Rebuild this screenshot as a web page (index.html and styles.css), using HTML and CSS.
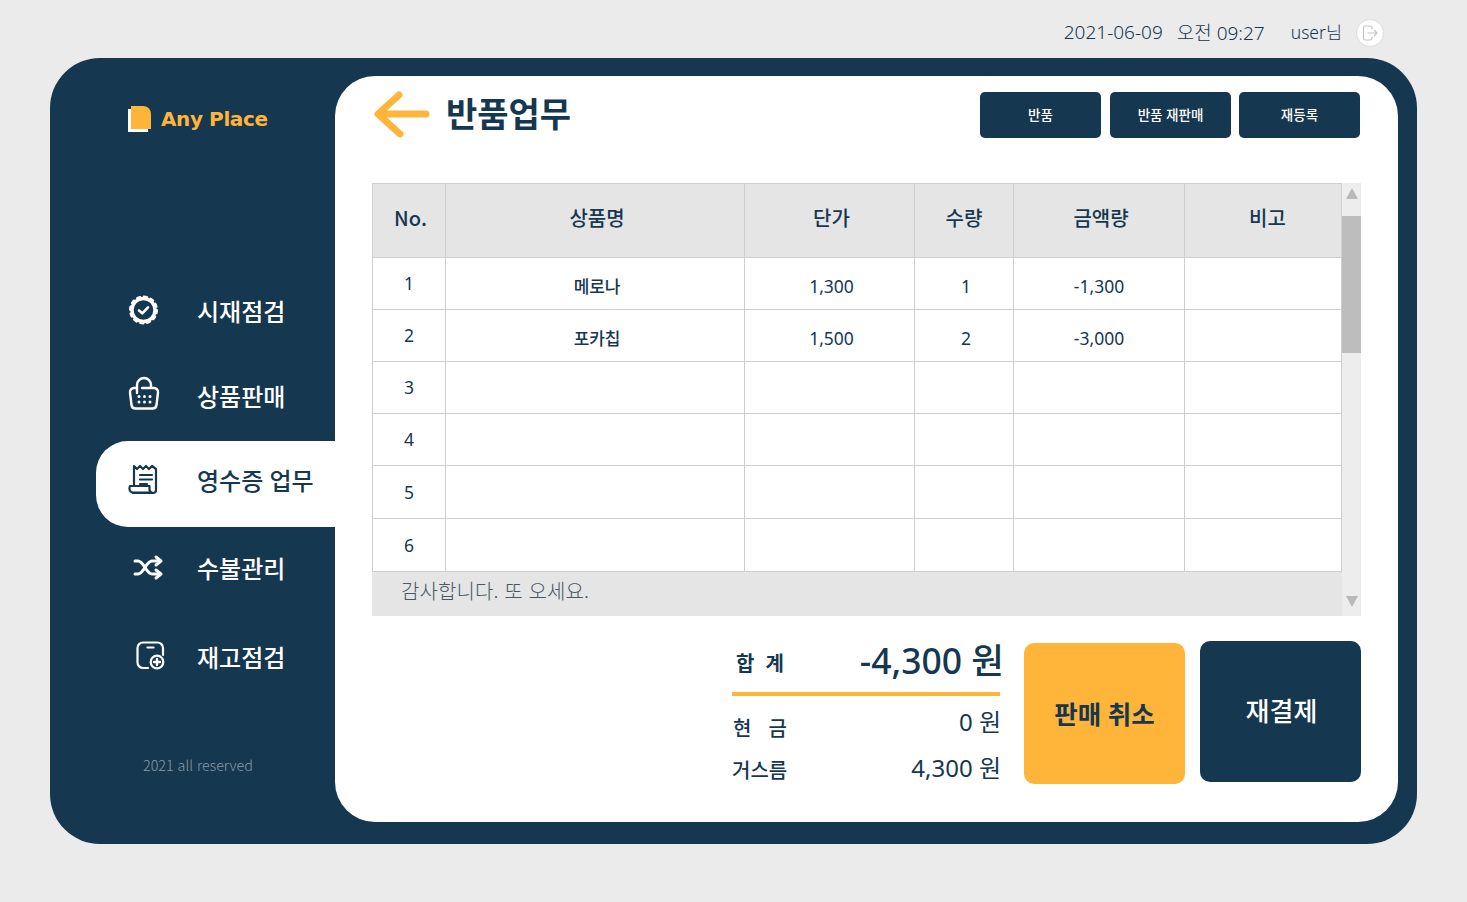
FILE: index.html
```html
<!DOCTYPE html>
<html lang="ko">
<head>
    <meta charset="UTF-8">
    <title>반품업무</title>
    <link rel="stylesheet" href="styles.css">
</head>
<body>
    <div class="topbar">
        <span class="date">2021-06-09</span>
        <span class="time">오전 09:27</span>
        <span class="user">user님</span>
        <span class="logout">
            <svg width="18" height="18" viewBox="0 0 18 18" fill="none" stroke="#c4c4c4" stroke-width="1.2" stroke-linecap="round" stroke-linejoin="round">
                <path d="M11 5V3.800A1.800 1.800 0 0 0 9.200 2H4.300a1.800 1.800 0 0 0-1.800 1.800v10.400A1.800 1.800 0 0 0 4.300 16h4.900a1.800 1.800 0 0 0 1.800-1.800V13"/>
                <path d="M7 9h9M13.500 6.500 16 9l-2.500 2.500"/>
            </svg>
        </span>
    </div>

    <div class="frame">
        <aside class="sidebar">
            <div class="logo">
                <span class="logo-mark"></span>
                <span class="logo-text">Any Place</span>
            </div>
            <nav class="menu">
                <a class="menu-item">
                    <svg class="menu-icon" width="40" height="32" viewBox="0 0 40 32" fill="none" stroke="currentColor" stroke-linecap="round" stroke-linejoin="round">
                        <circle cx="15.500" cy="16" r="11.500" stroke-width="3.400"/>
                        <circle cx="15.500" cy="16" r="13.400" stroke-width="2.200" stroke-dasharray="3.200 3.810"/>
                        <path d="M11 16.500l3.300 2.800 5.700-6" stroke-width="2.600"/>
                    </svg>
                    <span>시재점검</span>
                </a>
                <a class="menu-item">
                    <svg class="menu-icon" width="40" height="32" viewBox="0 -1 40 32" fill="none" stroke="currentColor" stroke-width="2.400" stroke-linecap="round" stroke-linejoin="round">
                        <path d="M9 8H6a4 4 0 0 0-4 4.500l1.500 12.500a4 4 0 0 0 4 3.500h17a4 4 0 0 0 4-3.500L30 12.500A4 4 0 0 0 26 8h-2"/>
                        <path d="M9 13V5a7 7 0 0 1 14 0v3h-9"/>
                        <g fill="currentColor" stroke="none">
                            <circle cx="11" cy="16.500" r="1.500"/><circle cx="16.500" cy="16.500" r="1.500"/><circle cx="22" cy="16.500" r="1.500"/>
                            <circle cx="11" cy="22" r="1.500"/><circle cx="16.500" cy="22" r="1.500"/><circle cx="22" cy="22" r="1.500"/>
                        </g>
                    </svg>
                    <span>상품판매</span>
                </a>
                <a class="menu-item active">
                    <svg class="menu-icon" width="40" height="32" viewBox="0 0 40 32" fill="none" stroke="currentColor" stroke-width="2.200" stroke-linecap="round" stroke-linejoin="round">
                        <path d="M6 21V2l3 3 3-3 3 3 3-3 3 3 3-3 4 3v21a3 3 0 0 1-3 3H5"/>
                        <path d="M2 22h19.500v3.500a3 3 0 0 0 2.500 3H5a3.500 3.500 0 0 1-3.500-3.500c0-1.500 0-3 .5-3z"/>
                        <path d="M12 11h12M12 15.500h12M12 20h7"/>
                    </svg>
                    <span>영수증 업무</span>
                </a>
                <a class="menu-item">
                    <svg class="menu-icon" width="40" height="32" viewBox="0 0 40 32" fill="none" stroke="currentColor" stroke-width="3" stroke-linecap="round" stroke-linejoin="round">
                        <path d="M7 10h3c6 0 8 13 14 13h8"/>
                        <path d="M7 23h3c6 0 8-13 14-13h8"/>
                        <path d="M28 6l5 4-5 4M28 19l5 4-5 4"/>
                    </svg>
                    <span>수불관리</span>
                </a>
                <a class="menu-item">
                    <svg class="menu-icon" width="40" height="32" viewBox="0 0 40 32" fill="none" stroke="currentColor" stroke-width="2.200" stroke-linecap="round" stroke-linejoin="round">
                        <path d="M20 28h-5a5.500 5.500 0 0 1-5.500-5.500V8A5.500 5.500 0 0 1 15 2.500h14.500A5.500 5.500 0 0 1 35 8v7"/>
                        <path d="M19.500 7.500h6"/>
                        <circle cx="29" cy="22" r="6.300"/>
                        <path d="M29 19v6M26 22h6" stroke-width="2.400"/>
                    </svg>
                    <span>재고점검</span>
                </a>
            </nav>
            <div class="copyright">2021 all reserved</div>
        </aside>

        <main class="panel">
            <header class="panel-head">
                <svg class="back" width="60" height="52" viewBox="0 0 60 52" fill="none" stroke="#ffb43a" stroke-width="7" stroke-linecap="round" stroke-linejoin="round">
                    <path d="M54 26H7M27 7 6 26l22 20"/>
                </svg>
                <h1 class="title">반품업무</h1>
                <div class="head-btns">
                    <button class="head-btn">반품</button>
                    <button class="head-btn">반품 재판매</button>
                    <button class="head-btn">재등록</button>
                </div>
            </header>

            <section class="table-wrap">
                <div class="table-col">
                    <table class="items">
                        <colgroup>
                            <col class="c-no"><col class="c-name"><col class="c-price"><col class="c-qty"><col class="c-amt"><col class="c-note">
                        </colgroup>
                        <thead>
                            <tr><th>No.</th><th>상품명</th><th>단가</th><th>수량</th><th>금액량</th><th>비고</th></tr>
                        </thead>
                        <tbody>
                            <tr><td class="no">1</td><td class="bold">메로나</td><td>1,300</td><td>1</td><td>-1,300</td><td></td></tr>
                            <tr><td class="no">2</td><td class="bold">포카칩</td><td>1,500</td><td>2</td><td>-3,000</td><td></td></tr>
                            <tr><td class="no">3</td><td></td><td></td><td></td><td></td><td></td></tr>
                            <tr><td class="no">4</td><td></td><td></td><td></td><td></td><td></td></tr>
                            <tr class="tall"><td class="no">5</td><td></td><td></td><td></td><td></td><td></td></tr>
                            <tr class="tall"><td class="no">6</td><td></td><td></td><td></td><td></td><td></td></tr>
                        </tbody>
                    </table>
                    <div class="thanks">감사합니다. 또 오세요.</div>
                </div>
                <div class="scrollbar">
                    <span class="arrow-up"></span>
                    <span class="thumb"></span>
                    <span class="arrow-down"></span>
                </div>
            </section>

            <section class="bottom">
                <div class="totals">
                    <div class="total-row">
                        <span class="total-label">합 계</span>
                        <span class="total-value">-4,300 원</span>
                    </div>
                    <div class="sub-row cash">
                        <span class="sub-label">현 금</span>
                        <span class="sub-value">0 원</span>
                    </div>
                    <div class="sub-row">
                        <span class="sub-label tight">거스름</span>
                        <span class="sub-value">4,300 원</span>
                    </div>
                </div>
                <button class="action cancel">판매 취소</button>
                <button class="action repay">재결제</button>
            </section>
        </main>
    </div>
</body>
</html>
```

FILE: styles.css
```css
* {
    box-sizing: border-box;
}

body {
    margin: 0;
    height: 902px;
    overflow: hidden;
    background-color: #ebebeb;
    color: #163750;
    font-family: "Noto Sans", "Noto Sans CJK KR", sans-serif;
}

.topbar {
    height: 58px;
    display: flex;
    align-items: center;
    justify-content: flex-end;
    padding: 5px 83px 0 0;
    font-size: 19px;
    font-weight: 300;
    color: #163750;
}

.time {
    margin-left: 14px;
}

.user {
    margin-left: 26px;
    font-size: 17.5px;
}

.logout {
    width: 28px;
    height: 28px;
    margin: 2px 0 0 14px;
    border-radius: 50%;
    background-color: #fff;
    border: 1px solid #dcdcdc;
    display: flex;
    align-items: center;
    justify-content: center;
}

.frame {
    width: 1367px;
    height: 786px;
    margin-left: 50px;
    padding: 18px 19px 22px 0;
    display: flex;
    background-color: #163750;
    border-radius: 50px;
}

.sidebar {
    width: 285px;
    flex: none;
    display: flex;
    flex-direction: column;
    color: #fff;
}

.logo {
    display: flex;
    align-items: center;
    height: 28px;
    margin: 29px 0 0 81px;
}

.logo-mark {
    width: 20px;
    height: 23px;
    margin: -3px 10px 0 0;
    background-color: #ffb43a;
    border-radius: 0 8px 0 0;
    box-shadow: -3px 3px 0 #fff;
}

.logo-text {
    font-family: "DejaVu Sans", sans-serif;
    font-weight: 700;
    font-size: 20px;
    letter-spacing: -0.4px;
    color: #ffb43a;
}

.menu {
    margin: 134px 0 0 46px;
    display: flex;
    flex-direction: column;
}

.menu-item {
    height: 86px;
    padding-left: 32px;
    display: flex;
    align-items: center;
    gap: 29px;
    font-size: 24px;
    font-weight: 500;
    border-radius: 32px 0 0 32px;
}

.menu-item:nth-child(2) {
    margin-top: -1px;
}

.menu-item:nth-child(3) {
    margin-top: 3px;
}

.menu-item:nth-child(4) {
    margin-top: -3px;
}

.menu-item:nth-child(5) {
    margin-top: 3px;
}

.menu-icon {
    flex: none;
    overflow: visible;
}

.menu-item.active {
    background-color: #fff;
    color: #163750;
    padding-bottom: 9px;
}

.copyright {
    margin: 55px 0 0 93px;
    font-family: "Noto Sans CJK KR", sans-serif;
    font-size: 14.3px;
    font-weight: 300;
    color: #8a9aa8;
}

.panel {
    flex: 1;
    background-color: #fff;
    border-radius: 40px;
    padding: 0 37px;
    display: flex;
    flex-direction: column;
}

.panel-head {
    height: 107px;
    display: flex;
    align-items: flex-start;
}

.back {
    margin-top: 12px;
    flex: none;
}

.title {
    margin: 13px 0 0 14px;
    font-size: 34px;
    line-height: 50px;
    font-weight: 700;
}

.head-btns {
    margin: 16px 0 0 auto;
    padding-right: 1px;
    display: flex;
    gap: 8px;
}

.head-btn {
    width: 121px;
    height: 46px;
    padding-bottom: 3px;
    border: none;
    border-radius: 5px;
    background-color: #163750;
    color: #fff;
    font-family: inherit;
    font-size: 13.5px;
    font-weight: 500;
}

.head-btn:first-child {
    margin-right: 1px;
}

.table-wrap {
    display: flex;
    width: 989px;
    height: 433px;
}

.table-col {
    width: 970px;
    display: flex;
    flex-direction: column;
}

.items {
    width: 969px;
    border-collapse: collapse;
    table-layout: fixed;
}

.c-no { width: 73px; }
.c-name { width: 299px; }
.c-price { width: 170px; }
.c-qty { width: 99px; }
.c-amt { width: 171px; }
.c-note { width: 157px; }

.items th,
.items td {
    border: 1px solid #cfcfcf;
    text-align: center;
    padding: 0;
}

.items th {
    height: 74px;
    background-color: #e5e5e5;
    font-family: "Noto Sans CJK KR", sans-serif;
    font-size: 20px;
    font-weight: 500;
    padding: 0 0 6px 4px;
}

.items th:first-child {
    padding-left: 3px;
}

.items th:nth-child(4) {
    padding-left: 0;
}

.items th:nth-child(6) {
    padding-left: 9px;
}

.items td {
    height: 52px;
    font-size: 17.5px;
    padding: 4px 0 0 4px;
    color: #163750;
}

.items td:nth-child(5) {
    padding-left: 0;
}

.items .tall td {
    height: 53px;
}

.items td.bold {
    font-family: "Noto Sans CJK KR", sans-serif;
    font-size: 17px;
    font-weight: 500;
    letter-spacing: -0.2px;
}

.items td.no {
    padding: 0 0 1px;
}

.thanks {
    flex: 1;
    background-color: #e5e5e5;
    padding: 0 0 8px 29px;
    display: flex;
    align-items: center;
    font-family: "Noto Sans CJK KR", sans-serif;
    font-size: 20px;
    font-weight: 300;
    letter-spacing: 0.1px;
    color: #4a5864;
}

.scrollbar {
    width: 19px;
    display: flex;
    flex-direction: column;
    align-items: center;
    background-color: #ededed;
}

.arrow-up,
.arrow-down {
    width: 0;
    height: 0;
    border-left: 6.5px solid transparent;
    border-right: 6.5px solid transparent;
}

.arrow-up {
    margin-top: 5px;
    border-bottom: 11px solid #b9b9b9;
}

.arrow-down {
    margin-top: auto;
    margin-bottom: 9px;
    border-top: 11px solid #b9b9b9;
}

.thumb {
    width: 19px;
    height: 137px;
    margin-top: 17px;
    background-color: #bdbdbd;
}

.bottom {
    display: flex;
    align-items: flex-start;
    margin-top: 25px;
}

.totals {
    width: 268px;
    margin-left: 360px;
    flex: none;
}

.total-row {
    height: 55px;
    padding: 0 0 16px 4px;
    display: flex;
    justify-content: space-between;
    align-items: center;
    border-bottom: 4px solid #ffb43a;
}

.total-label {
    font-size: 20px;
    font-weight: 700;
    word-spacing: 6px;
    padding-top: 8px;
}

.total-value {
    font-size: 35.5px;
    font-weight: 500;
    margin-right: -4px;
    white-space: nowrap;
}

.sub-row {
    height: 46px;
    display: flex;
    justify-content: space-between;
    align-items: center;
}

.cash {
    margin-top: 5px;
}

.sub-label {
    font-size: 20px;
    font-weight: 500;
    word-spacing: 12px;
    padding: 6px 0 0 1px;
}

.sub-label.tight {
    padding: 0 0 2px;
}

.sub-value {
    font-size: 24px;
    padding-bottom: 8px;
    margin-right: -1px;
}

.action {
    flex: none;
    height: 141px;
    border: none;
    border-radius: 10px;
    font-family: inherit;
    font-weight: 700;
}

.cancel {
    width: 161px;
    margin: 2px 0 0 24px;
    padding-bottom: 4px;
    background-color: #ffb43a;
    color: #163750;
    font-size: 25.5px;
}

.repay {
    width: 161px;
    margin-left: 15px;
    padding: 0 0 4px 2px;
    background-color: #163750;
    color: #fff;
    font-size: 26px;
    font-weight: 500;
}
```
